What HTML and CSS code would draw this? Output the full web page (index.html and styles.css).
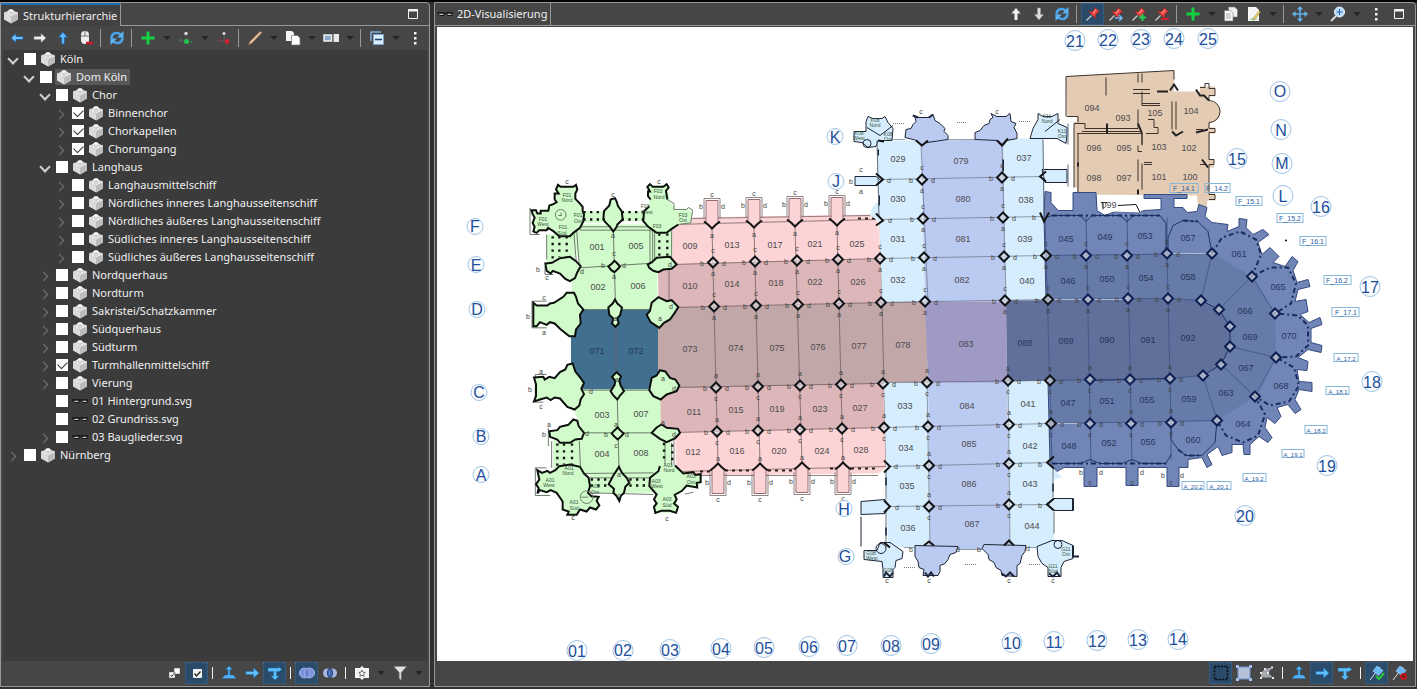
FILE: index.html
```html
<!DOCTYPE html>
<html lang="de">
<head>
<meta charset="utf-8">
<title>Dom Köln – Strukturhierarchie</title>
<link rel="stylesheet" href="styles.css">
</head>
<body>
<svg class="defs" aria-hidden="true">
  <defs>
    <symbol id="brick" viewBox="0 0 16 16"><path d="M1 5 8 1.500 15 5V11.500L8 15.500 1 11.500Z" fill="#dcdcdc"/><path d="M1 5 8 2 15 5 8 8.500Z" fill="#f8f8f8"/><path d="M8 8.500 15 5V11.500L8 15.500Z" fill="#bcbcbc"/><path d="M5.500 2.500V5q2.500 1.500 5 0V2.500Z" fill="#ccc"/><ellipse cx="8" cy="2.500" rx="2.500" ry="1.300" fill="#fff"/><path d="M1.500 4v2q1.500 1 3 0V4ZM11.500 4v2q1.500 1 3 0V4ZM6 6v2q2 1 4 0V6Z" fill="#eaeaea" stroke="#aaa" stroke-width=".4"/></symbol>
    <symbol id="layer" viewBox="0 0 16 16"><path d="M1 7h6v2.500H2.500zM9.500 7H15v2.500h-4.500z" fill="#ccc" stroke="#111"/><path d="M0 7h16" stroke="#111"/></symbol>
    <symbol id="left" viewBox="0 0 16 16"><path d="M2 8l5-4.500V6.500h7v3H7v3z" fill="#6cc0ff" stroke="#1d5c9c" stroke-width=".8"/></symbol>
    <symbol id="right" viewBox="0 0 16 16"><path d="M14 8 9 3.500V6.500H2v3h7v3z" fill="#eee" stroke="#888" stroke-width=".6"/></symbol>
    <symbol id="bright" viewBox="0 0 16 16"><path d="M15 8 9.500 3V6.500H2v3h7.500v3.500z" fill="#63c0ff" stroke="#2678b8" stroke-width=".8"/></symbol>
    <symbol id="up" viewBox="0 0 16 16"><path d="M8 2 3.500 7.500H6.500V14h3V7.500h3z" fill="#5db6ff" stroke="#1d5c9c" stroke-width=".8"/></symbol>
    <symbol id="upw" viewBox="0 0 16 16"><path d="M8 2 3.500 7.500H6.500V14h3V7.500h3z" fill="#f2f2f2" stroke="#999" stroke-width=".5"/></symbol>
    <symbol id="downw" viewBox="0 0 16 16"><path d="M8 14 3.500 8.500H6.500V2h3v6.500h3z" fill="#ddd" stroke="#999" stroke-width=".5"/></symbol>
    <symbol id="mouse" viewBox="0 0 16 16"><rect x="3" y="1" width="8" height="13" rx="4" fill="#eee"/><path d="M3 6h8M7 1v5" stroke="#777"/><path d="M8 13h7" stroke="#d01828" stroke-width="2.500"/></symbol>
    <symbol id="refresh" viewBox="0 0 16 16"><path d="M2.500 8.500C2.500 3 8 1.500 12 4.500M13.500 7.500c0 5.500-5.500 7-9.500 4" fill="none" stroke="#4aa3e8" stroke-width="2.600"/><path d="M14.500 1v6.500H8zM1.500 15V8.500H8z" fill="#5cb4f4"/></symbol>
    <symbol id="plus" viewBox="0 0 16 16"><path d="M8 1.500v13M1.500 8h13" stroke="#12d040" stroke-width="3"/></symbol>
    <symbol id="nodeadd" viewBox="0 0 16 16"><path d="M8 4v8M1 11h6" stroke="#666" stroke-dasharray="1 1"/><circle cx="8" cy="3.500" r="1.700" fill="#ddd"/><circle cx="8.500" cy="11.500" r="2.500" fill="#24c04c"/><circle cx="3" cy="10" r="1" fill="#2c8f48"/><circle cx="13" cy="12" r="1" fill="#2c8f48"/></symbol>
    <symbol id="nodedel" viewBox="0 0 16 16"><path d="M8 4v7M2 11h6" stroke="#666" stroke-dasharray="1 1"/><circle cx="8" cy="3.500" r="1.500" fill="#ddd"/><circle cx="11" cy="11.500" r="2.400" fill="#d02030"/><circle cx="4" cy="10" r="1" fill="#933"/></symbol>
    <symbol id="pencil" viewBox="0 0 16 16"><path d="M1.500 15 3 11.500 13 1.500l2 1L5 13z" fill="#f0c8a4" stroke="#8a6346" stroke-width=".6"/></symbol>
    <symbol id="copy" viewBox="0 0 16 16"><path d="M1 1h6l2 2v8H1z" fill="#f4f4f4"/><path d="M6.500 5.500h6L15 8v7H6.500z" fill="#fff" stroke="#777" stroke-width=".7"/></symbol>
    <symbol id="rename" viewBox="0 0 16 16"><path d="M1 5h7.500v6H1z" fill="#8ba9c8" stroke="#eee" stroke-width="1.500"/><path d="M10.500 4H16v8h-5.500z" fill="#e8e8e8"/></symbol>
    <symbol id="collapse" viewBox="0 0 16 16"><path d="M2 11V2h10" fill="none" stroke="#7fb2dc" stroke-width="1.500"/><path d="M4.500 4.500h10v10h-10z" fill="#d9ecfb" stroke="#7fa5c8"/><path d="M6 9.500h7" stroke="#17466f" stroke-width="1.500"/></symbol>
    <symbol id="dots" viewBox="0 0 16 16"><path d="M7 2h2.500v2.500H7zM7 7h2.500v2.500H7zM7 12h2.500v2.500H7z" fill="#f4f4f4"/></symbol>
    <symbol id="max" viewBox="0 0 16 16"><path d="M3.500 3.500h9v9h-9z" fill="none" stroke="#f4f4f4"/><path d="M3 4.500h10" stroke="#f4f4f4" stroke-width="2"/></symbol>
    <symbol id="checks" viewBox="0 0 16 16"><path d="M8 3h6v6H8zM3 7h6v6H3z" fill="#fff" stroke="#555" stroke-width=".5"/><path d="m4.500 10 1.200 1.500L8 8.500" fill="none" stroke="#333"/></symbol>
    <symbol id="check" viewBox="0 0 16 16"><rect x="4" y="4" width="9" height="9" rx="1" fill="#f4f4f4"/><path d="m5.500 8.500 2 2.500 4-4.500" fill="none" stroke="#222" stroke-width="1.300"/></symbol>
    <symbol id="tup" viewBox="0 0 16 16"><path d="M8 1 4.500 4.500H7V10H4l-3 3.500h14L12.500 10H9V4.500h2.500z" fill="#50b0f4" stroke="#226da8" stroke-width=".5"/></symbol>
    <symbol id="tdown" viewBox="0 0 16 16"><path d="M1 3h11l-1-1.500 4 3-4 2.500V6.500H9.500V11h2.500L8 15l-4-4h2.500V6.500H1z" fill="#58bbfa" stroke="#226da8" stroke-width=".4"/></symbol>
    <symbol id="rings" viewBox="0 0 16 16"><circle cx="5.500" cy="8" r="5" fill="#7d94dd" stroke="#a3b3e8"/><circle cx="10.500" cy="8" r="5" fill="#7d94dd" stroke="#a3b3e8"/><ellipse cx="8" cy="8" rx="2.300" ry="4.400" fill="#6680cf" stroke="#a3b3e8"/></symbol>
    <symbol id="inter" viewBox="0 0 16 16"><circle cx="5.500" cy="8" r="4.500" fill="#a9b8e2"/><circle cx="10.500" cy="8" r="4.500" fill="#a9b8e2"/><ellipse cx="8" cy="8" rx="2.500" ry="4.200" fill="#4a72bd" stroke="#223f75"/></symbol>
    <symbol id="star" viewBox="0 0 16 16"><path d="M1 3h5l2-2 2 2h5v10h-5l-2 2-2-2H1z" fill="#f4f4f4"/><path d="m8 5 1 2.200 2.300.2-1.700 1.600.5 2.400L8 10.200l-2.100 1.200.5-2.400-1.700-1.600L7 7.200z" fill="none" stroke="#555" stroke-width=".8"/></symbol>
    <symbol id="funnel" viewBox="0 0 16 16"><path d="M2 1.500h12.500L9.200 7.500V15l-2-1.500v-6z" fill="#e2e2e2" stroke="#888" stroke-width=".6"/></symbol>
    <symbol id="pin" viewBox="0 0 16 16"><path d="M6.500 9.500 1.500 14.500" stroke="#ccc" stroke-width="1.200"/><path d="M10 1.500 14.500 6l-2 .5-2 2.500.5 3.500-7.500-7L7 6l2.500-2.500z" fill="#f04a48" stroke="#a31b1b" stroke-width=".7"/><path d="m8 7 3-3.500" stroke="#ffa8a0"/></symbol>
    <symbol id="cpy2" viewBox="0 0 16 16"><path d="M5.500 1h6L14.500 3.500V11h-9z" fill="#eee" stroke="#777" stroke-width=".6"/><path d="M1.500 4.500h6L10 7v8H1.500z" fill="#f8f8f8" stroke="#777" stroke-width=".6"/><path d="M3 8h5M3 10h5M3 12h5" stroke="#999" stroke-width=".8"/></symbol>
    <symbol id="note" viewBox="0 0 16 16"><path d="M2 1h8l3 3v11H2z" fill="#f6f6f6"/><path d="M6 13.500 13 5l1.500 1-6.500 8.500z" fill="#e8c860" stroke="#8c7230" stroke-width=".4"/><path d="M4 13h7" stroke="#88b890"/></symbol>
    <symbol id="move" viewBox="0 0 16 16"><path d="M8 1v14M1 8h14" stroke="#5cabe8" stroke-width="1.700"/><path d="M8 0 5 3.500h6zM8 16l-3-3.500h6zM0 8l3.500-3v6zM16 8l-3.500-3v6z" fill="#64b4f0"/></symbol>
    <symbol id="search" viewBox="0 0 16 16"><path d="M1 15 6 10" stroke="#d8d8d8" stroke-width="2"/><circle cx="9.500" cy="6" r="5" fill="#b8dcf8" stroke="#e8f4ff"/><path d="M9.500 3v6M6.500 6h6" stroke="#2268a8"/></symbol>
    <symbol id="marq" viewBox="0 0 16 16"><path d="M1.500 1.500h13v13h-13z" fill="none" stroke="#080808" stroke-width="1.300" stroke-dasharray="2 1.300"/></symbol>
    <symbol id="rect" viewBox="0 0 16 16"><path d="M2 2h12v12H2z" fill="#b4c0d8" stroke="#6f94cc"/><path d="M0 0h3v3H0zM13 0h3v3h-3zM0 13h3v3H0zM13 13h3v3h-3z" fill="#a4c0ec"/></symbol>
    <symbol id="poly" viewBox="0 0 16 16"><path d="M2 8 6 4 13.500 2.500 9 8l5 4.500H2z" fill="#a4aab0"/><path d="M1 7h2v2H1zM5 3h2v2H5zM12 1.500h2v2h-2zM13 12h2v2h-2zM1 12h2v2H1zM8 7h2v2H8z" fill="#e8e8e8"/></symbol>
    <symbol id="flag" viewBox="0 0 16 16"><path d="M1 15 11 2" stroke="#ddd"/><path d="m8 1 6 4.500-4.500 5L4 6z" fill="#68b8f8" stroke="#b4dcff" stroke-width=".6"/></symbol>
    <g id="pillar"><path class="pier" d="M0-5 2-3 5 0 3 2 0 5-2 3-5 0-3-2Z"/></g>
    <g id="pn"><use href="#pillar"/><text x="0" y="-10">c</text><text x="0" y="13">a</text><text x="-11" y="3">b</text><text x="11" y="3">d</text></g>
    <g id="ps"><use href="#pillar"/><text x="0" y="-10">a</text><text x="0" y="13">c</text><text x="-11" y="3">b</text><text x="11" y="3">d</text></g>
    <g id="bn"><path class="wall" d="M-8-10V-30H8V-10"/><path class="butt" d="M-6-5V-28H6V-5L0 0Z"/><path class="bold" d="M-8-7-4-4 0 0 4-4 8-7"/><text x="0" y="-32">c</text><text x="-11" y="-20">b</text><text x="11" y="-20">d</text><text x="0" y="9">a</text></g>
    <g id="bs"><path class="wall" d="M-8 10V32H8V10"/><path class="butt" d="M-6 5V30H6V5L0 0Z"/><path class="bold" d="M-8 7-4 4 0 0 4 4 8 7"/><text x="0" y="38">c</text><text x="-11" y="21">b</text><text x="11" y="21">d</text><text x="0" y="-3">a</text></g>
  </defs>
</svg>

<main class="workbench">
  <section class="pane side">
    <header class="head">
      <h2 class="tab tab-on"><svg class="ic"><use href="#brick"/></svg>Strukturhierarchie</h2>
      <button class="btn" aria-label="Maximieren"><svg class="ic"><use href="#max"/></svg></button>
    </header>
    <div class="bar">
      <button class="btn" aria-label="Zurück"><svg class="ic"><use href="#left"/></svg></button>
      <button class="btn" aria-label="Vor"><svg class="ic"><use href="#right"/></svg></button>
      <button class="btn" aria-label="Hoch"><svg class="ic"><use href="#up"/></svg></button>
      <button class="btn" aria-label="Maus"><svg class="ic"><use href="#mouse"/></svg></button>
      <i class="sep"></i>
      <button class="btn" aria-label="Aktualisieren"><svg class="ic"><use href="#refresh"/></svg></button>
      <i class="sep"></i>
      <button class="btn" aria-label="Neu"><svg class="ic"><use href="#plus"/></svg></button><button class="caret" aria-label="Mehr"></button>
      <button class="btn" aria-label="Knoten hinzufügen"><svg class="ic"><use href="#nodeadd"/></svg></button><button class="caret" aria-label="Mehr"></button>
      <button class="btn" aria-label="Knoten entfernen"><svg class="ic"><use href="#nodedel"/></svg></button>
      <i class="sep"></i>
      <button class="btn" aria-label="Bearbeiten"><svg class="ic"><use href="#pencil"/></svg></button><button class="caret" aria-label="Mehr"></button>
      <button class="btn" aria-label="Kopieren"><svg class="ic"><use href="#copy"/></svg></button><button class="caret" aria-label="Mehr"></button>
      <button class="btn" aria-label="Umbenennen"><svg class="ic"><use href="#rename"/></svg></button><button class="caret" aria-label="Mehr"></button>
      <i class="sep"></i>
      <button class="btn" aria-label="Einklappen"><svg class="ic"><use href="#collapse"/></svg></button><button class="caret" aria-label="Mehr"></button>
      <button class="btn" aria-label="Menü"><svg class="ic"><use href="#dots"/></svg></button>
    </div>
    <ul class="tree">
      <li><div class="row"><button class="tw open" aria-label="Zuklappen"></button><label><input type="checkbox"><span class="name"><svg class="ic"><use href="#brick"/></svg>Köln</span></label></div>
        <ul>
          <li><div class="row"><button class="tw open" aria-label="Zuklappen"></button><label><input type="checkbox"><span class="name sel"><svg class="ic"><use href="#brick"/></svg>Dom Köln</span></label></div>
            <ul>
              <li><div class="row"><button class="tw open" aria-label="Zuklappen"></button><label><input type="checkbox"><span class="name"><svg class="ic"><use href="#brick"/></svg>Chor</span></label></div>
                <ul>
                  <li><div class="row"><button class="tw" aria-label="Aufklappen"></button><label><input type="checkbox" checked><span class="name"><svg class="ic"><use href="#brick"/></svg>Binnenchor</span></label></div></li>
                  <li><div class="row"><button class="tw" aria-label="Aufklappen"></button><label><input type="checkbox" checked><span class="name"><svg class="ic"><use href="#brick"/></svg>Chorkapellen</span></label></div></li>
                  <li><div class="row"><button class="tw" aria-label="Aufklappen"></button><label><input type="checkbox" checked><span class="name"><svg class="ic"><use href="#brick"/></svg>Chorumgang</span></label></div></li>
                </ul>
              </li>
              <li><div class="row"><button class="tw open" aria-label="Zuklappen"></button><label><input type="checkbox"><span class="name"><svg class="ic"><use href="#brick"/></svg>Langhaus</span></label></div>
                <ul>
                  <li><div class="row"><button class="tw" aria-label="Aufklappen"></button><label><input type="checkbox"><span class="name"><svg class="ic"><use href="#brick"/></svg>Langhausmittelschiff</span></label></div></li>
                  <li><div class="row"><button class="tw" aria-label="Aufklappen"></button><label><input type="checkbox"><span class="name"><svg class="ic"><use href="#brick"/></svg>Nördliches inneres Langhausseitenschiff</span></label></div></li>
                  <li><div class="row"><button class="tw" aria-label="Aufklappen"></button><label><input type="checkbox"><span class="name"><svg class="ic"><use href="#brick"/></svg>Nördliches äußeres Langhausseitenschiff</span></label></div></li>
                  <li><div class="row"><button class="tw" aria-label="Aufklappen"></button><label><input type="checkbox"><span class="name"><svg class="ic"><use href="#brick"/></svg>Südliches inneres Langhausseitenschiff</span></label></div></li>
                  <li><div class="row"><button class="tw" aria-label="Aufklappen"></button><label><input type="checkbox"><span class="name"><svg class="ic"><use href="#brick"/></svg>Südliches äußeres Langhausseitenschiff</span></label></div></li>
                </ul>
              </li>
              <li><div class="row"><button class="tw" aria-label="Aufklappen"></button><label><input type="checkbox"><span class="name"><svg class="ic"><use href="#brick"/></svg>Nordquerhaus</span></label></div></li>
              <li><div class="row"><button class="tw" aria-label="Aufklappen"></button><label><input type="checkbox"><span class="name"><svg class="ic"><use href="#brick"/></svg>Nordturm</span></label></div></li>
              <li><div class="row"><button class="tw" aria-label="Aufklappen"></button><label><input type="checkbox"><span class="name"><svg class="ic"><use href="#brick"/></svg>Sakristei/Schatzkammer</span></label></div></li>
              <li><div class="row"><button class="tw" aria-label="Aufklappen"></button><label><input type="checkbox"><span class="name"><svg class="ic"><use href="#brick"/></svg>Südquerhaus</span></label></div></li>
              <li><div class="row"><button class="tw" aria-label="Aufklappen"></button><label><input type="checkbox"><span class="name"><svg class="ic"><use href="#brick"/></svg>Südturm</span></label></div></li>
              <li><div class="row"><button class="tw" aria-label="Aufklappen"></button><label><input type="checkbox" checked><span class="name"><svg class="ic"><use href="#brick"/></svg>Turmhallenmittelschiff</span></label></div></li>
              <li><div class="row"><button class="tw" aria-label="Aufklappen"></button><label><input type="checkbox"><span class="name"><svg class="ic"><use href="#brick"/></svg>Vierung</span></label></div></li>
              <li><div class="row"><span class="tw none"></span><label><input type="checkbox"><span class="name"><svg class="ic"><use href="#layer"/></svg>01 Hintergrund.svg</span></label></div></li>
              <li><div class="row"><span class="tw none"></span><label><input type="checkbox"><span class="name"><svg class="ic"><use href="#layer"/></svg>02 Grundriss.svg</span></label></div></li>
              <li><div class="row"><button class="tw" aria-label="Aufklappen"></button><label><input type="checkbox"><span class="name"><svg class="ic"><use href="#layer"/></svg>03 Bauglieder.svg</span></label></div></li>
            </ul>
          </li>
        </ul>
      </li>
      <li><div class="row"><button class="tw" aria-label="Aufklappen"></button><label><input type="checkbox"><span class="name"><svg class="ic"><use href="#brick"/></svg>Nürnberg</span></label></div></li>
    </ul>
    <footer class="bar foot">
      <button class="btn" aria-label="Mehrfachauswahl"><svg class="ic"><use href="#checks"/></svg></button>
      <button class="btn on" aria-label="Auswahl"><svg class="ic"><use href="#check"/></svg></button>
      <i class="sep"></i>
      <button class="btn" aria-label="Nach oben"><svg class="ic"><use href="#tup"/></svg></button>
      <button class="btn" aria-label="Gleich"><svg class="ic"><use href="#bright"/></svg></button>
      <button class="btn on" aria-label="Nach unten"><svg class="ic"><use href="#tdown"/></svg></button>
      <i class="sep"></i>
      <button class="btn on" aria-label="Vereinigung"><svg class="ic"><use href="#rings"/></svg></button>
      <button class="btn" aria-label="Schnitt"><svg class="ic"><use href="#inter"/></svg></button>
      <i class="sep"></i>
      <button class="btn" aria-label="Favoriten"><svg class="ic"><use href="#star"/></svg></button><button class="caret" aria-label="Mehr"></button>
      <button class="btn" aria-label="Filter"><svg class="ic"><use href="#funnel"/></svg></button><button class="caret" aria-label="Mehr"></button>
    </footer>
  </section>

  <section class="pane view">
    <header class="head">
      <h2 class="tab"><svg class="ic"><use href="#layer"/></svg>2D-Visualisierung</h2>
      <div class="tools">
        <button class="btn" aria-label="Hoch"><svg class="ic"><use href="#upw"/></svg></button>
        <button class="btn" aria-label="Runter"><svg class="ic"><use href="#downw"/></svg></button>
        <button class="btn" aria-label="Aktualisieren"><svg class="ic"><use href="#refresh"/></svg></button>
        <i class="sep"></i>
        <button class="btn on" aria-label="Anheften"><svg class="ic"><use href="#pin"/></svg></button>
        <button class="btn" aria-label="Zum Pin"><svg class="ic" viewBox="0 0 16 16"><use href="#pin"/><path d="M7 12h7m-3-3 3 3-3 3" fill="none" stroke="#6cb8f4" stroke-width="1.500"/></svg></button>
        <button class="btn" aria-label="Pin hinzufügen"><svg class="ic" viewBox="0 0 16 16"><use href="#pin"/><path d="M11.500 8v7M8 11.500h7" stroke="#20d050" stroke-width="2"/></svg></button>
        <button class="btn" aria-label="Pin entfernen"><svg class="ic" viewBox="0 0 16 16"><use href="#pin"/><path d="M7 13h8" stroke="#d02030" stroke-width="2"/></svg></button>
        <i class="sep"></i>
        <button class="btn" aria-label="Neu"><svg class="ic"><use href="#plus"/></svg></button><button class="caret" aria-label="Mehr"></button>
        <button class="btn" aria-label="Kopieren"><svg class="ic"><use href="#cpy2"/></svg></button>
        <button class="btn" aria-label="Notiz"><svg class="ic"><use href="#note"/></svg></button><button class="caret" aria-label="Mehr"></button>
        <i class="sep"></i>
        <button class="btn" aria-label="Verschieben"><svg class="ic"><use href="#move"/></svg></button><button class="caret" aria-label="Mehr"></button>
        <button class="btn" aria-label="Zoom"><svg class="ic"><use href="#search"/></svg></button><button class="caret" aria-label="Mehr"></button>
        <button class="btn" aria-label="Menü"><svg class="ic"><use href="#dots"/></svg></button>
        <button class="btn" aria-label="Maximieren"><svg class="ic"><use href="#max"/></svg></button>
      </div>
    </header>
    <div class="canvas">
    <svg class="plan" viewBox="437 28 976 633" role="img" aria-label="Grundriss Kölner Dom">
      <path fill="#406f90" d="M571 310H658V390H571Z"/>
      <path class="wall" d="M616 325V375"/>

      <!-- nave -->
      <g id="nave">
        <path fill="#fcd4d5" d="M672 224 693 218 870 215 878 222 884 303V383L886 468 878 474 700 476 676 474Z"/>
        <path fill="#dcb6b8" d="M658 265 880 259 882 303 884 428 660 433Z"/>
        <path fill="#c2a7a8" d="M658 308 926 302 928 383 658 389Z"/>
        <path class="wall" d="M672 225 876 220M692 219 870 216M680 472 886 467M700 476H878M672 265 880 259M672 308 926 302M672 388 928 383M674 433 886 428M671 225V265M674 434V472M669 265V306"/>
        <path class="wall" d="M712 229 718 464M754 228 760 464M795 227 802 464M837 226 843 464M880 222 886 467"/>
        <path class="dash2" d="M700 472H712M725 471H752M768 471H795M830 469H878M858 219H878"/>
        <use href="#bn" x="712" y="229"/><use href="#bn" x="754" y="228"/><use href="#bn" x="795" y="227"/><use href="#bn" x="837" y="226"/>
        <use href="#bs" x="718" y="464"/><use href="#bs" x="760" y="464"/><use href="#bs" x="802" y="463"/><use href="#bs" x="843" y="463"/>
      </g>

      <!-- north and south tower -->
      <g class="tower" transform="translate(520 170) scale(.33333)">
        <path class="flat" d="M160 165H455V270L412 290V420H155V330L180 295 160 200ZM80 195H165V280H80ZM185 125H260V160H185ZM300 125H375V155H300Z"/>
        <path class="thin" d="M160 172 170 290M170 182 178 290M160 172H400M180 182H395M80 195V270M30 115V195H60M36 395H80M36 395V475H80M75 290V315H100M390 180V280M398 180V280M404 180V280M455 165V270M280 186 286 392M180 295 383 282M190 420H400"/>
        <path class="edge" d="M34 122 48 122 52 132H62V124H85L88 108 100 104 110 98 104 90V72H116L108 60 114 46 122 52H160L168 46 172 60 166 72V88L178 100 188 112V125L192 135 190 155 180 175 160 190 150 200H118L100 185 84 175 80 182H58L50 190 40 186 44 172 38 160 44 144 38 134Z"/>
        <path class="edge" d="M268 108 272 90 285 86 290 96 294 110 305 125 308 150 292 165 290 172 280 186 270 172 256 158 250 150 252 125Z"/>
        <path class="flat" d="M385 45 410 52 440 45 450 95 470 125 505 118 518 130 512 160 475 165 440 192H410L370 155V125L388 110Z"/>
        <path class="edge" fill="none" d="M392 90 384 80V66H390L382 52 390 44 398 52H430L440 44 446 54 438 64 442 90"/>
        <path class="open" d="M388 110 372 125 370 155 385 172 410 190H440L455 178 475 165"/>
        <path class="thin" d="M442 90 462 102V120L500 120 505 114 518 122 512 160 475 165"/>
        <path class="edge" d="M76 282 96 280 120 266 150 262 168 275 182 290 172 308 165 326 150 335 136 328 120 312 98 304 92 312 80 304Z"/>
        <path class="edge" d="M40 400 50 408H82L90 402 102 400 130 382 140 370H162L168 382 174 402 190 420 180 436 182 462 168 480 165 500H148L120 478 104 462 90 458 80 466 60 458 50 470H40Z"/>
        <path class="edge" d="M283 274 290 280 300 291 292 300 283 308 274 302 265 291 276 282Z"/>
        <path class="edge" d="M285 390 292 402 306 414 300 438 292 446 296 462 286 472 276 462 280 448 268 436 265 414 278 402Z"/>
        <path class="edge" d="M395 400 415 383 440 395 455 392 475 413 464 430 450 450 432 460 418 475 392 458 380 436 390 424Z"/>
        <path class="edge" d="M383 285 396 278 410 265 450 262 470 285 455 298 430 300 415 308 400 304 388 295Z"/>
        <path class="dash" d="M190 128H255M190 150H255M305 128H370M305 150H370M118 200V262M140 200V262M418 192V262M442 192V262M98 200V270"/>
        <circle class="thin" cx="122" cy="136" r="16"/><path class="thin" d="M115 138H125L122 130"/>
      </g>
      <g class="tower" transform="translate(520 350) scale(.33333)">
        <path class="flat" d="M155 120H422V230L455 280V372L420 375V430H210V375H180L165 280 190 250 165 190ZM100 270H180V360H100Z"/>
        <path class="thin" d="M178 275 182 372 400 370M210 385H390M210 430 400 435M46 75V158H70M46 75H80M85 235V290M95 275V355M46 355V438H90M46 355H80M292 150 297 352M190 250 395 250M160 122H390M455 280V370M435 275V345M495 434 520 428"/>
        <path class="edge" d="M42 84 70 82 74 90 88 82 104 86 120 68 136 60 142 46 158 42 166 66 182 86 192 100 184 118 192 134 182 150 178 168 164 180 142 172 120 147 104 144 92 152 80 144 60 150 42 156 48 140V104Z"/>
        <path class="edge" d="M88 245 112 242 120 232 145 226 160 210 172 214 176 230 192 250 185 268 166 270 150 280H120L112 270 90 262Z"/>
        <path class="edge" d="M52 362 66 370 82 364 90 370 106 362 118 350 150 345 180 352 192 372 206 385 210 410 204 430 214 440 236 442 230 454 238 468 228 480 210 474 200 486 180 480 170 496H142L146 486 128 480V456L110 430 92 422 80 428 60 422 52 432 56 416 48 404 58 390Z"/>
        <path class="edge" d="M297 352 306 370 320 385 328 400 316 412 312 430 302 440 298 454 290 440 280 430 282 418 266 404 280 378Z"/>
        <path class="flat" d="M435 345 465 348 500 375 540 375 545 400 530 415 495 415 470 435 472 490H405V435L388 410 390 385Z"/>
        <path class="open" d="M465 348 490 372 520 368 526 376 542 374V398L530 400 532 414 500 408 486 424 464 436 470 450 462 462 474 472 468 490 450 484H424L406 490 402 472 410 462 402 450 410 435 388 410 390 385 415 365 420 350"/>
        <path class="edge" d="M395 85 410 78 420 62 436 66 450 85 466 90 478 108 470 125 440 135 422 150 400 140 388 122Z"/>
        <path class="edge" d="M290 68 303 80 298 94 302 108 312 125 300 138 292 150 280 138 272 125 284 106 286 94 276 82Z"/>
        <path class="edge" d="M293 234 300 242 311 252 302 262 293 270 284 262 275 252 284 242Z"/>
        <path class="edge" d="M395 250 410 234 425 225 440 235 474 238 480 250 466 266 440 278 420 268Z"/>
        <path class="dash" d="M212 390H268M212 408H268M328 390H388M328 408H388M132 282V345M156 282V345M112 282V350M432 280V340M457 285V340"/>
        <circle class="thin" cx="200" cy="443" r="19"/><path class="thin" d="M185 443H205"/>
      </g>

      <!-- transept -->
      <path fill="#d5edfd" d="M877 141H921L925 302 882 303ZM1003 139H1043L1048 300 1006 302ZM884 383H928L930 548H888ZM1007 382H1050L1054 548H1010Z"/>
      <path fill="#bbcaf0" d="M921 141 1003 140 1006 302H925ZM928 383 1007 382 1010 550H930Z"/>
      <path fill="#9e99c5" d="M925 302H1006L1007 383H928Z"/>
      <g class="ends">
        <path fill="#d5edfd" stroke="none" d="M872 208 880 200V222L870 216ZM1052 467 1062 478 1054 480Z"/>
        <path fill="#bbcaf0" d="M905 138 906 130 911 129 913 125 916 122 915 118 913 116 918 118H929L933 115 935 121 940 124 945 129 944 132 948 136V140L927 143 921 146 917 141ZM975 140V133L980 131 984 126 989 124 990 120 993 118 991 114 997 117H1006L1010 114 1011 122 1016 124 1014 128 1017 134V139L1007 141 1003 146 998 141ZM915 546 958 547 956 553 950 555 948 560 945 564 940 566V572L938 576 H923L924 570 919 568 918 562 915 557ZM982 549 984 545 1026 546 1025 552 1022 556 1020 564 1017 566V577L1002 576 1001 571 996 568 994 563 989 560 988 555Z"/>
        <path fill="#d5edfd" d="M854 132H866V122L868 117 873 119H882L885 117 888 123 893 129 892 141H878L876 147 868 148 862 143 854 142ZM1030 139 1033 129 1038 120V114L1043 117H1052L1058 114V124L1067 128V135L1066 144 1057 139ZM855 177H876L881 181 876 186H855ZM1042 170H1067V183H1045ZM861 502 885 500 889 507 885 514 861 515ZM1047 504 1054 499H1073V511H1054ZM864 551H877L880 543H890L903 552 902 559 896 561 895 568 893 570V578H883V570L882 562 864 560ZM1037 547 1052 541 1062 541 1073 546V559L1064 562 1061 568V577H1048V568L1042 564 1038 557Z"/>
        <path fill="none" stroke-width="2" d="M913 116 918 118M929 118 933 115M884 577 886 573 890 577 893 573M925 573 928 577 931 573 934 577M1002 574 1006 577 1010 573 1014 577M1049 574 1053 577 1057 573 1060 577M1073 546V557H1079M1073 499V511M878 150V156M879 196V206M886 478V486M886 528V536M1003 160V172M1053 484V492"/>
        <path fill="none" stroke="#5d6d7d" d="M877 141 879 217M1043 140 1044 216M886 470V500M886 512V548M1053 467V498M1054 512V534M1068 124V145M1068 165V187"/>
        <path fill="none" d="M867 128 880 136 893 126M1045 132 1060 120M861 517V547"/><circle cx="867" cy="144" r="4" fill="none"/><circle cx="881" cy="549" r="5" fill="none"/><circle cx="1058" cy="545" r="4" fill="none"/>
      </g>

      <!-- sacristy -->
      <g class="sac">
        <path fill="#e4cbb3" d="M1066 77 1140 73 1174 71V92H1205L1210 102A10 10 0 0 1 1210 123L1209 193 1206 210 1198 208 1197 196 1077 195V117H1067Z"/>
        <path fill="#e4cbb3" stroke="none" d="M1074 122H1078V188H1074ZM1200 87H1215V97H1200ZM1203 128H1215V134H1203ZM1203 160H1214V168H1203ZM1203 194H1215V201H1203Z"/>
        <path d="M1066 117V77L1174 71V80M1106 78V96M1078 195V134M1074 124V188M1067 117H1078V123M1074 124H1085V129H1138V110M1138 83V74M1142 83V74M1142 92V106H1160M1142 104H1160M1077 134H1142V145M1142 134V146M1138 146V152H1142M1082 132H1140M1138 160V182M1142 164V190M1144 163H1152M1144 165H1152M1172 102V130M1176 102V130M1148 120H1154V128H1158V134H1146M1133 90H1150M1133 94H1150M1200 88H1205V84H1209V89H1215V96H1209V101M1209 101A11 11 0 0 1 1209 123V129H1215V133H1209V160H1214V165H1209V195H1215V200H1209M1200 165H1206M1203 130H1196"/>
        <path class="bold" d="M1172 132 1176 136 1183 132M1138 124 1142 134M1196 90 1200 96H1204L1209 101M1170 91 1174 85 1178 91M1157 92H1168M1196 133 1208 130M1202 160 1208 168M1107 124V134M1138 195V190M1078 163V167"/>
      </g>

      <!-- choir -->
      <g class="choir">
        <path fill="#7185b7" stroke="#344a80" d="M1044 217 1045 192 1051 193V203L1058 211H1073V193L1096 193 1097 211 1105 216 1115 212 1139 213 1144 211 1161 210V199H1144V195H1187V199H1174V208H1183L1187 213 1197 212 1199 205 1207 208 1205 217 1212 223 1228 225 1227 232 1239 227V219L1247 220 1246 228 1253 235 1263 230 1269 235 1258 243 1262 255 1270 248 1279 257 1273 263 1285 267 1292 257 1298 262 1293 271 1297 283 1308 280 1310 287 1298 290 1295 302 1306 300 1308 312 1300 315 1309 323 1320 318 1322 325 1311 329V343L1322 346 1321 353 1308 350 1298 358 1308 362 1307 371 1297 370 1299 382 1312 383V392L1299 390 1295 400 1301 410 1295 414 1288 405 1277 408 1281 417 1275 424 1267 418 1265 428 1272 438 1268 443 1259 437 1250 445V455H1244L1243 445H1232V453L1222 456 1218 447 1207 455 1212 465 1207 468 1202 458 1188 460V468H1179V487H1167V468H1138V486H1126V468H1097V487H1084V468H1064L1057 472 1050 464Z"/>
        <path fill="#667ba8" d="M1046 256 1212 254 1252 277 1275 314 1276 358 1255 397 1217 421 1051 424Z"/>
        <path fill="#60709a" d="M1006 301 1168 299 1201 301 1219 310 1230 327V347L1221 365 1203 376 1170 379 1007 382Z"/>
        <path class="cl" d="M1046 256 1212 254M1048 300 1168 299 1201 301M1050 381 1170 379 1203 376M1051 424 1217 421M1045 217 1052 464M1086 216 1091 464M1127 216 1132 464M1167 218V254L1171 423V460M1212 254 1201 301M1252 277 1219 310M1230 347 1276 358M1221 365 1255 397M1203 376 1217 421M1275 314 1252 277M1276 358 1255 397"/>
        <path class="cb" d="M1046 218 1052 216H1080L1086 222 1092 216H1120L1127 222 1134 216H1160L1166 224V254M1201 301 1219 310 1230 327V347L1221 365 1203 376M1090 381 1170 379M1171 424V440L1178 450 1186 456H1202L1215 443 1217 421M1168 254V238L1173 226 1183 221 1198 222 1208 232 1212 254M1052 464H1080L1090 460 1100 464H1122L1132 460 1142 464H1166L1171 455"/>
        <path class="cd" d="M1212 254 1222 238 1240 232 1256 240 1261 255 1252 277 1270 268 1288 268 1296 284 1291 304 1275 314 1298 316 1308 326V346L1296 357 1276 358 1294 368 1299 386 1289 402 1270 406 1255 397 1265 415 1258 436 1243 443 1226 436 1217 421M1052 464H1166M1052 216H1160M1178 450 1186 456H1202M1183 221 1198 222"/>
        <path class="white" d="M1170 254H1210M1050 300H1084M1092 300H1124M1055 424H1080"/>
      </g>
      <path fill="#fff" d="M1098 196H1117V210L1138 206 1141 213 1112 212 1104 215Z"/>
      <path class="bold thinner" d="M1101 203H1107M1103 203V210M1118 206 1136 205 1140 213"/>

      <!-- bay divisions and piers of the transept -->
      <path class="wall soft" d="M881 180 1042 177M881 220 1044 217M880 259 1046 256M888 467 1050 463M888 507 1050 505M884 428 1051 424M921 144 928 302M1002 144 1006 300M927 383 930 546M1008 381 1010 546M878 303 1048 300M884 383 1050 381M948 140H975M893 140H905M904 548H915M1026 548H1038M958 550H983"/>
      <g class="piers">
        <use href="#pn" x="713" y="263"/><use href="#pn" x="755" y="262"/><use href="#pn" x="797" y="261"/><use href="#pn" x="838" y="260"/><use href="#pn" x="880" y="259"/>
        <use href="#pn" x="714" y="307"/><use href="#pn" x="756" y="306"/><use href="#pn" x="798" y="305"/><use href="#pn" x="839" y="304"/><use href="#pn" x="881" y="303"/>
        <use href="#ps" x="716" y="388"/><use href="#ps" x="758" y="387"/><use href="#ps" x="800" y="386"/><use href="#ps" x="841" y="385"/><use href="#ps" x="883" y="384"/>
        <use href="#ps" x="717" y="432"/><use href="#ps" x="758" y="431"/><use href="#ps" x="800" y="430"/><use href="#ps" x="842" y="429"/><use href="#ps" x="884" y="428"/>
        <use href="#pn" x="922" y="180"/><use href="#pn" x="923" y="219"/><use href="#pn" x="924" y="258"/><use href="#pn" x="925" y="302"/>
        <use href="#pn" x="1002" y="178"/><use href="#pn" x="1003" y="218"/><use href="#pn" x="1004" y="257"/><use href="#pn" x="1005" y="301"/>
        <use href="#ps" x="927" y="383"/><use href="#ps" x="928" y="427"/><use href="#ps" x="929" y="466"/><use href="#ps" x="929" y="507"/>
        <use href="#ps" x="1008" y="381"/><use href="#ps" x="1009" y="425"/><use href="#ps" x="1009" y="464"/><use href="#ps" x="1009" y="505"/>
        <use href="#pn" x="1046" y="256"/><use href="#pn" x="1048" y="300"/><use href="#ps" x="1050" y="381"/><use href="#ps" x="1051" y="424"/>
      </g>
      <path class="bold" d="M876 174 883 180 876 186M876 214 883 221 876 226M1046 172 1040 177 1046 182M1040 213 1044 222 1049 213M884 461 890 467 884 473M884 501 890 507 884 513M1054 457 1047 463 1054 469M1054 499 1047 505 1054 511M916 141 922 146 928 141M997 141 1002 146 1008 139M924 546 929 542 934 546M1004 546 1009 541 1014 546M878 141 884 142M884 543 890 548"/>
      <g class="piers dark">
        <use href="#pn" x="1086" y="256"/><use href="#pn" x="1127" y="256"/><use href="#pn" x="1167" y="254"/><use href="#pillar" x="1212" y="254"/>
        <use href="#pn" x="1088" y="300"/><use href="#pn" x="1128" y="299"/><use href="#pn" x="1168" y="299"/>
        <use href="#pillar" x="1201" y="301"/><use href="#pillar" x="1219" y="310"/><use href="#pillar" x="1230" y="327"/><use href="#pillar" x="1230" y="347"/><use href="#pillar" x="1221" y="365"/><use href="#pillar" x="1203" y="376"/>
        <use href="#ps" x="1090" y="380"/><use href="#ps" x="1130" y="380"/><use href="#ps" x="1170" y="379"/>
        <use href="#ps" x="1090" y="424"/><use href="#ps" x="1131" y="424"/><use href="#ps" x="1171" y="423"/><use href="#pillar" x="1217" y="421"/>
        <use href="#pillar" x="1252" y="277"/><use href="#pillar" x="1275" y="314"/><use href="#pillar" x="1276" y="358"/><use href="#pillar" x="1255" y="397"/>
      </g>

      <g class="room">
        <text x="597" y="250">001</text><text x="636" y="249">005</text><text x="598" y="290">002</text><text x="638" y="289">006</text>
        <text x="602" y="418">003</text><text x="641" y="417">007</text><text x="602" y="457">004</text><text x="641" y="456">008</text>
        <text x="690" y="249">009</text><text x="732" y="248">013</text><text x="775" y="248">017</text><text x="815" y="247">021</text><text x="857" y="247">025</text>
        <text x="690" y="289">010</text><text x="732" y="287">014</text><text x="776" y="286">018</text><text x="815" y="285">022</text><text x="858" y="285">026</text>
        <text x="690" y="352">073</text><text x="736" y="351">074</text><text x="777" y="351">075</text><text x="818" y="350">076</text><text x="859" y="349">077</text><text x="903" y="348">078</text>
        <text x="694" y="415">011</text><text x="736" y="413">015</text><text x="777" y="412">019</text><text x="820" y="412">023</text><text x="860" y="411">027</text>
        <text x="693" y="455">012</text><text x="737" y="454">016</text><text x="779" y="454">020</text><text x="822" y="454">024</text><text x="861" y="453">028</text>
        <text x="898" y="162">029</text><text x="961" y="164">079</text><text x="1024" y="161">037</text>
        <text x="898" y="202">030</text><text x="963" y="202">080</text><text x="1026" y="203">038</text>
        <text x="898" y="242">031</text><text x="963" y="242">081</text><text x="1025" y="242">039</text>
        <text x="898" y="283">032</text><text x="962" y="283">082</text><text x="1027" y="284">040</text>
        <text x="905" y="409">033</text><text x="967" y="409">084</text><text x="1028" y="407">041</text>
        <text x="906" y="451">034</text><text x="969" y="447">085</text><text x="1030" y="449">042</text>
        <text x="907" y="489">035</text><text x="969" y="487">086</text><text x="1030" y="487">043</text>
        <text x="908" y="531">036</text><text x="972" y="527">087</text><text x="1032" y="529">044</text>
        <text x="966" y="347">083</text>
        <text x="1092" y="111">094</text><text x="1123" y="121">093</text><text x="1155" y="116">105</text><text x="1191" y="114">104</text>
        <text x="1094" y="151">096</text><text x="1124" y="151">095</text><text x="1159" y="150">103</text><text x="1189" y="151">102</text>
        <text x="1094" y="181">098</text><text x="1124" y="181">097</text><text x="1159" y="180">101</text><text x="1190" y="180">100</text>
        <text x="1109" y="208">099</text>
      </g>
      <g class="room deep">
        <text x="597" y="354">071</text><text x="636" y="354">072</text>
        <text x="1066" y="242">045</text><text x="1105" y="240">049</text><text x="1145" y="239">053</text><text x="1188" y="241">057</text><text x="1239" y="257">061</text>
        <text x="1068" y="284">046</text><text x="1107" y="282">050</text><text x="1146" y="281">054</text><text x="1188" y="280">058</text><text x="1278" y="290">065</text>
        <text x="1025" y="346">088</text><text x="1066" y="344">089</text><text x="1107" y="343">090</text><text x="1148" y="343">091</text><text x="1188" y="341">092</text>
        <text x="1245" y="314">066</text><text x="1250" y="340">069</text><text x="1289" y="339">070</text><text x="1246" y="371">067</text><text x="1281" y="389">068</text>
        <text x="1068" y="406">047</text><text x="1107" y="404">051</text><text x="1147" y="403">055</text><text x="1189" y="402">059</text><text x="1226" y="396">063</text>
        <text x="1069" y="449">048</text><text x="1109" y="446">052</text><text x="1148" y="445">056</text><text x="1193" y="443">060</text><text x="1243" y="427">064</text>
      </g>

      <g class="tiny">
        <text x="567" y="197">F01</text><text x="567" y="202">Nord</text><text x="543" y="221">F01</text><text x="543" y="226">West</text><text x="563" y="229">F01</text><text x="562" y="235">Süd</text><text x="578" y="217">F01</text><text x="578" y="223">Ost</text>
        <text x="658" y="193">F03</text><text x="659" y="199">Nord</text><text x="645" y="208">F03</text><text x="647" y="214">West</text><text x="657" y="228">F03</text><text x="683" y="217">F03</text><text x="683" y="222">Ost</text>
        <text x="569" y="470">A01</text><text x="568" y="475">Nord</text><text x="550" y="482">A01</text><text x="549" y="487">West</text><text x="574" y="504">A01</text><text x="574" y="510">Süd</text><text x="595" y="488">A01</text><text x="595" y="494">Ost</text>
        <text x="668" y="467">A03</text><text x="669" y="472">Nord</text><text x="656" y="483">A03</text><text x="657" y="488">West</text><text x="691" y="478">A03</text><text x="691" y="484">Ost</text><text x="667" y="501">A03</text><text x="667" y="507">Süd</text>
        <text x="875" y="122">K08</text><text x="875" y="127">Nord</text><text x="859" y="135">K08</text><text x="859" y="140">West</text><text x="888" y="136">K08</text><text x="888" y="141">Ost</text><text x="1047" y="118">K11</text><text x="1047" y="123">Nord</text><text x="1062" y="133">K11</text><text x="1062" y="138">Ost</text>
        <text x="871" y="555">G08</text><text x="872" y="560">West</text><text x="888" y="572">G08</text><text x="1066" y="551">G11</text><text x="1066" y="556">Ost</text><text x="1053" y="568">G11</text><text x="1053" y="573">Süd</text>
      </g>
      <g class="piers">
        <text x="613" y="197">c</text><text x="613" y="238">a</text><text x="614" y="256">c</text><text x="603" y="268">b</text><text x="624" y="268">d</text><text x="614" y="279">a</text><text x="567" y="184">c</text><text x="659" y="184">c</text><text x="538" y="272">b</text><text x="547" y="280">c</text><text x="582" y="274">d</text><text x="544" y="300">c</text><text x="528" y="319">b</text><text x="544" y="335">a</text><text x="660" y="321">a</text><text x="671" y="309">d</text><text x="670" y="267">d</text><text x="615" y="321">a</text>
        <text x="541" y="374">a</text><text x="530" y="392">b</text><text x="541" y="409">c</text><text x="591" y="394">d</text><text x="663" y="381">a</text><text x="674" y="391">d</text><text x="617" y="382">a</text><text x="606" y="437">b</text><text x="627" y="437">d</text><text x="616" y="427">a</text><text x="616" y="448">c</text><text x="544" y="437">b</text><text x="549" y="427">a</text><text x="587" y="436">d</text><text x="674" y="437">d</text><text x="663" y="425">a</text><text x="619" y="477">a</text><text x="619" y="498">c</text><text x="573" y="520">c</text><text x="667" y="521">c</text>
        <text x="921" y="114">c</text><text x="997" y="114">c</text><text x="861" y="172">c</text><text x="851" y="184">b</text><text x="861" y="194">a</text><text x="889" y="183">d</text><text x="890" y="223">d</text><text x="1034" y="220">b</text><text x="911" y="552">b</text><text x="958" y="552">d</text><text x="979" y="552">b</text><text x="1028" y="551">d</text><text x="929" y="583">c</text><text x="1009" y="583">c</text><text x="887" y="583">c</text><text x="1053" y="583">c</text><text x="896" y="469">d</text><text x="897" y="510">d</text><text x="1040" y="467">b</text><text x="1040" y="508">b</text>
        <text x="1081" y="475">b</text><text x="1101" y="475">d</text><text x="1142" y="475">d</text><text x="1163" y="478">b</text><text x="1182" y="478">d</text><text x="1090" y="485">c</text><text x="1132" y="485">c</text><text x="1171" y="485">c</text>
      </g>
      <path class="micro" d="M893 124H904M957 123H967M1019 122H1030M904 568H915M965 565H976M1029 565H1040"/>

      <g class="tags">
        <rect x="1170" y="184" width="28" height="9"/><rect x="1205" y="184" width="25" height="9"/><rect x="1236" y="197" width="26" height="9"/><rect x="1277" y="214" width="26" height="9"/><rect x="1300" y="237" width="26" height="9"/><rect x="1324" y="276" width="27" height="9"/><rect x="1332" y="308" width="27" height="9"/><rect x="1334" y="354" width="24" height="8"/><rect x="1326" y="387" width="23" height="8"/><rect x="1305" y="426" width="22" height="8"/><rect x="1282" y="450" width="22" height="8"/><rect x="1243" y="474" width="23" height="8"/><rect x="1182" y="482" width="22" height="8"/><rect x="1207" y="482" width="24" height="8"/>
        <text x="1184" y="191">F_14.1</text><text x="1217" y="191">F_14.2</text><text x="1249" y="204">F_15.1</text><text x="1290" y="221">F_15.2</text><text x="1313" y="244">F_16.1</text><text x="1337" y="283">F_16.2</text><text x="1346" y="315">F_17.1</text>
        <g class="sm"><text x="1346" y="361">A_17.2</text><text x="1338" y="394">A_18.1</text><text x="1316" y="433">A_18.2</text><text x="1293" y="457">A_19.1</text><text x="1254" y="481">A_19.2</text><text x="1193" y="489">A_20.2</text><text x="1219" y="489">A_20.1</text></g>
      </g>
      <circle cx="1286" cy="241" r="1"/>

      <g class="axes">
        <circle cx="1075" cy="41" r="10"/><circle cx="1108" cy="40" r="10"/><circle cx="1141" cy="40" r="10"/><circle cx="1174" cy="39" r="10"/><circle cx="1208" cy="39" r="10"/>
        <circle cx="1280" cy="92" r="10"/><circle cx="1281" cy="130" r="10"/><circle cx="1282" cy="164" r="10"/><circle cx="1283" cy="196" r="10"/><circle cx="1237" cy="159" r="10"/><circle cx="1321" cy="207" r="10"/><circle cx="1370" cy="287" r="10"/><circle cx="1372" cy="382" r="10"/><circle cx="1327" cy="466" r="10"/><circle cx="1245" cy="516" r="10"/>
        <circle cx="835" cy="137" r="8"/><circle cx="836" cy="182" r="8"/><circle cx="844" cy="509" r="8"/><circle cx="846" cy="557" r="8"/>
        <circle cx="475" cy="227" r="8"/><circle cx="476" cy="265" r="8"/><circle cx="477" cy="310" r="8"/><circle cx="479" cy="393" r="8"/><circle cx="481" cy="437" r="8"/><circle cx="481" cy="475" r="8"/>
        <circle cx="577" cy="651" r="10"/><circle cx="623" cy="651" r="10"/><circle cx="670" cy="650" r="10"/><circle cx="721" cy="649" r="10"/><circle cx="764" cy="648" r="10"/><circle cx="809" cy="647" r="10"/><circle cx="847" cy="646" r="10"/><circle cx="891" cy="646" r="10"/><circle cx="931" cy="644" r="10"/><circle cx="1012" cy="643" r="10"/><circle cx="1054" cy="642" r="10"/><circle cx="1097" cy="641" r="10"/><circle cx="1138" cy="640" r="10"/><circle cx="1178" cy="640" r="10"/>
        <text x="1075" y="47">21</text><text x="1108" y="46">22</text><text x="1141" y="45">23</text><text x="1174" y="45">24</text><text x="1208" y="45">25</text>
        <text x="1280" y="97">O</text><text x="1281" y="136">N</text><text x="1282" y="169">M</text><text x="1283" y="202">L</text><text x="1237" y="165">15</text><text x="1321" y="213">16</text><text x="1370" y="293">17</text><text x="1372" y="388">18</text><text x="1327" y="472">19</text><text x="1245" y="522">20</text>
        <text x="835" y="143">K</text><text x="836" y="187">J</text><text x="844" y="515">H</text><text x="845" y="562">G</text>
        <text x="475" y="232">F</text><text x="476" y="271">E</text><text x="477" y="315">D</text><text x="479" y="398">C</text><text x="481" y="442">B</text><text x="481" y="481">A</text>
        <text x="577" y="657">01</text><text x="623" y="656">02</text><text x="670" y="656">03</text><text x="721" y="655">04</text><text x="764" y="654">05</text><text x="809" y="653">06</text><text x="847" y="652">07</text><text x="891" y="652">08</text><text x="931" y="650">09</text><text x="1012" y="649">10</text><text x="1054" y="648">11</text><text x="1097" y="647">12</text><text x="1138" y="646">13</text><text x="1178" y="645">14</text>
      </g>
    </svg>
    </div>
    <footer class="bar foot">
      <button class="btn on" aria-label="Rahmenauswahl"><svg class="ic"><use href="#marq"/></svg></button>
      <button class="btn" aria-label="Rechteck"><svg class="ic"><use href="#rect"/></svg></button>
      <button class="btn" aria-label="Polygon"><svg class="ic"><use href="#poly"/></svg></button>
      <i class="sep"></i>
      <button class="btn" aria-label="Nach oben"><svg class="ic"><use href="#tup"/></svg></button>
      <button class="btn on" aria-label="Gleich"><svg class="ic"><use href="#bright"/></svg></button>
      <button class="btn" aria-label="Nach unten"><svg class="ic"><use href="#tdown"/></svg></button>
      <i class="sep"></i>
      <button class="btn on" aria-label="Markierung setzen"><svg class="ic" viewBox="0 0 16 16"><use href="#flag"/><path d="m7 11 3 3 5-6" fill="none" stroke="#30c838" stroke-width="2"/></svg></button>
      <button class="btn" aria-label="Markierung löschen"><svg class="ic" viewBox="0 0 16 16"><use href="#flag"/><circle cx="11.500" cy="11.500" r="3.500" fill="#c01c20"/><path d="m10 10 3 3m0-3-3 3" stroke="#501010"/></svg></button>
    </footer>
  </section>
</main>
</body>
</html>
```
FILE: styles.css
```css
* { box-sizing: border-box; }
body {
  margin: 0;
  background: #303030;
  color: #f0f0f0;
  font: 11px/18px "Noto Sans", "Open Sans", sans-serif;
}
.defs { position: absolute; width: 0; height: 0; }
.workbench {
  display: flex;
  gap: 4px;
  height: 100vh;
  padding: 0 1px 2px 0;
  border-top: 2px solid #050505;
}
.pane {
  display: flex;
  flex-direction: column;
  min-width: 0;
  background: #464646;
  border: 1px solid #989898;
  border-radius: 0 4px 0 0;
}
.side { flex: 0 0 430px; }
.view { flex: 1; }

.head {
  display: flex;
  align-items: center;
  justify-content: space-between;
  height: 23px;
  padding-right: 5px;
  border-bottom: 1px solid #989898;
}
.tab {
  display: flex;
  align-items: center;
  gap: 4px;
  height: 22px;
  margin: 0;
  padding: 0 3px 0 2px;
  border-right: 1px solid #989898;
  font-size: 11px;
  font-weight: 400;
  white-space: nowrap;
}
.tab-on {
  height: 23px;
  background: #424242;
  border-top: 2px solid #1c6fb5;
  margin-bottom: -1px;
}
.tools, .bar { display: flex; align-items: center; }
.bar { height: 24px; padding-left: 4px; }
.btn, .caret, .tw {
  display: flex;
  align-items: center;
  justify-content: center;
  flex: none;
  padding: 0;
  border: 0;
  background: none;
  color: inherit;
}
.btn { width: 23px; height: 22px; }
.on { background: #2b4b6b; outline: 1px dotted #3f6c96; outline-offset: -1px; }
.ic { width: 16px; height: 16px; flex: none; }
.caret { width: 15px; height: 22px; }
.caret::after { content: ""; border: 4px solid transparent; border-top-color: #262626; border-bottom: 0; }
.sep { width: 1px; height: 18px; margin: 0 4px 0 3px; background: #999; }
.foot { height: 25px; justify-content: flex-end; padding: 0 3px 2px 0; }
.foot .sep { height: 12px; margin: 0 4px; background: #f0f0f0; }
.view .foot { padding-right: 4px; }

.tree {
  flex: 1;
  min-height: 0;
  overflow: hidden;
  margin: 0 2px;
  padding: 0 0 0 2px;
  background: #3b3b3b;
  list-style: none;
}
.tree ul { margin: 0; padding: 0 0 0 16px; list-style: none; }
.row { display: flex; align-items: center; height: 18px; }
.tw { width: 16px; height: 18px; margin-right: 3px; }
.tw::after {
  content: "";
  width: 6px;
  height: 6px;
  margin: 2px 4px 0 0;
  border: solid #757575;
  border-width: 1px 1px 0 0;
  outline: 0;
  box-shadow: inset -1px 1px 0 -1px #757575;
  transform: rotate(45deg);
}
.tw.open::after {
  margin: 0;
  border-color: #d0d0d0;
  border-width: 2px 2px 0 0;
  transform: rotate(135deg);
}
.tw.none::after { display: none; }
.row label { display: flex; align-items: center; gap: 3px; }
.row input {
  appearance: none;
  width: 12px;
  height: 12px;
  margin: 0;
  background: #fff;
}
.row input:checked::after {
  content: "";
  display: block;
  width: 8px;
  height: 5px;
  margin: 2px;
  border: solid #333;
  border-width: 0 0 1px 1px;
  transform: rotate(-45deg);
}
.name { display: flex; align-items: center; gap: 4px; padding: 0 3px 0 1px; white-space: nowrap; height: 16px; }
.sel { background: #585858; }

.canvas { flex: 1; min-height: 0; margin: 1px 2px 0; background: #fff; }
.plan { display: block; width: 100%; height: 100%; font-family: "Liberation Sans", Arial, sans-serif; text-anchor: middle; }
.tower .flat { fill: #d1fbca; }
.tower .edge { fill: #d1fbca; stroke: #0c100c; stroke-width: 6; }
.tower .open { fill: none; stroke: #0c100c; stroke-width: 6; }
.tower .thin { fill: none; stroke: #6d7d6b; stroke-width: 3; }
.tower .dash { fill: none; stroke: #111; stroke-width: 7; stroke-dasharray: 7 13; }
.wall { fill: none; stroke: #6f5c5e; stroke-width: 1; opacity: .75; }
.soft { stroke: #5c6474; opacity: .6; }
.butt { fill: #fcd4d5; stroke: #936f72; stroke-width: 1; }
.bold { fill: none; stroke: #151515; stroke-width: 2; }
.thinner { stroke-width: 1; }
.dash2 { fill: none; stroke: #2a1c1c; stroke-width: 2; stroke-dasharray: 3 4; }
.ends { stroke: #1d2436; stroke-width: 1; }
.sac { fill: none; stroke: #3d332c; stroke-width: 1; }
.sac .bold { stroke-width: 2; stroke: #222; }
.sac path:first-child { stroke: none; }
.choir { fill: none; }
.cl { stroke: #46598a; stroke-width: 1; }
.cb { stroke: #203466; stroke-width: 1; }
.cd { stroke: #1a2d60; stroke-width: 2; stroke-dasharray: 5 3 2 3; }
.white { stroke: #d8e0f0; stroke-width: 1; opacity: .7; }
.pier { fill: #f0f0f0; fill-opacity: .55; stroke: #101418; stroke-width: 2; }
.dark { --ink: #0e1e50; }
.dark .pier { stroke: #0e1e50; }
.piers text { font-size: 7px; fill: #404040; }
#pn text, #ps text, #bn text, #bs text { font-size: 7px; fill: #404040; stroke: none; }
#pillar .pier { stroke: var(--ink, #101418); }
.room { font-size: 9px; fill: #4c4c50; }
.deep { fill: #26365c; }
.tiny { font-size: 5px; fill: #35503a; }
.micro { stroke: #777; stroke-dasharray: 1 1; }
.tags { font-size: 7px; fill: #2c5ba4; }
.tags rect { fill: none; stroke: #86b7d8; }
.tags .sm { font-size: 6px; }
.axes { font-size: 16px; fill: #1e4f9a; }
.axes circle { fill: #fbfdff; stroke: #9fc3e4; }
```
